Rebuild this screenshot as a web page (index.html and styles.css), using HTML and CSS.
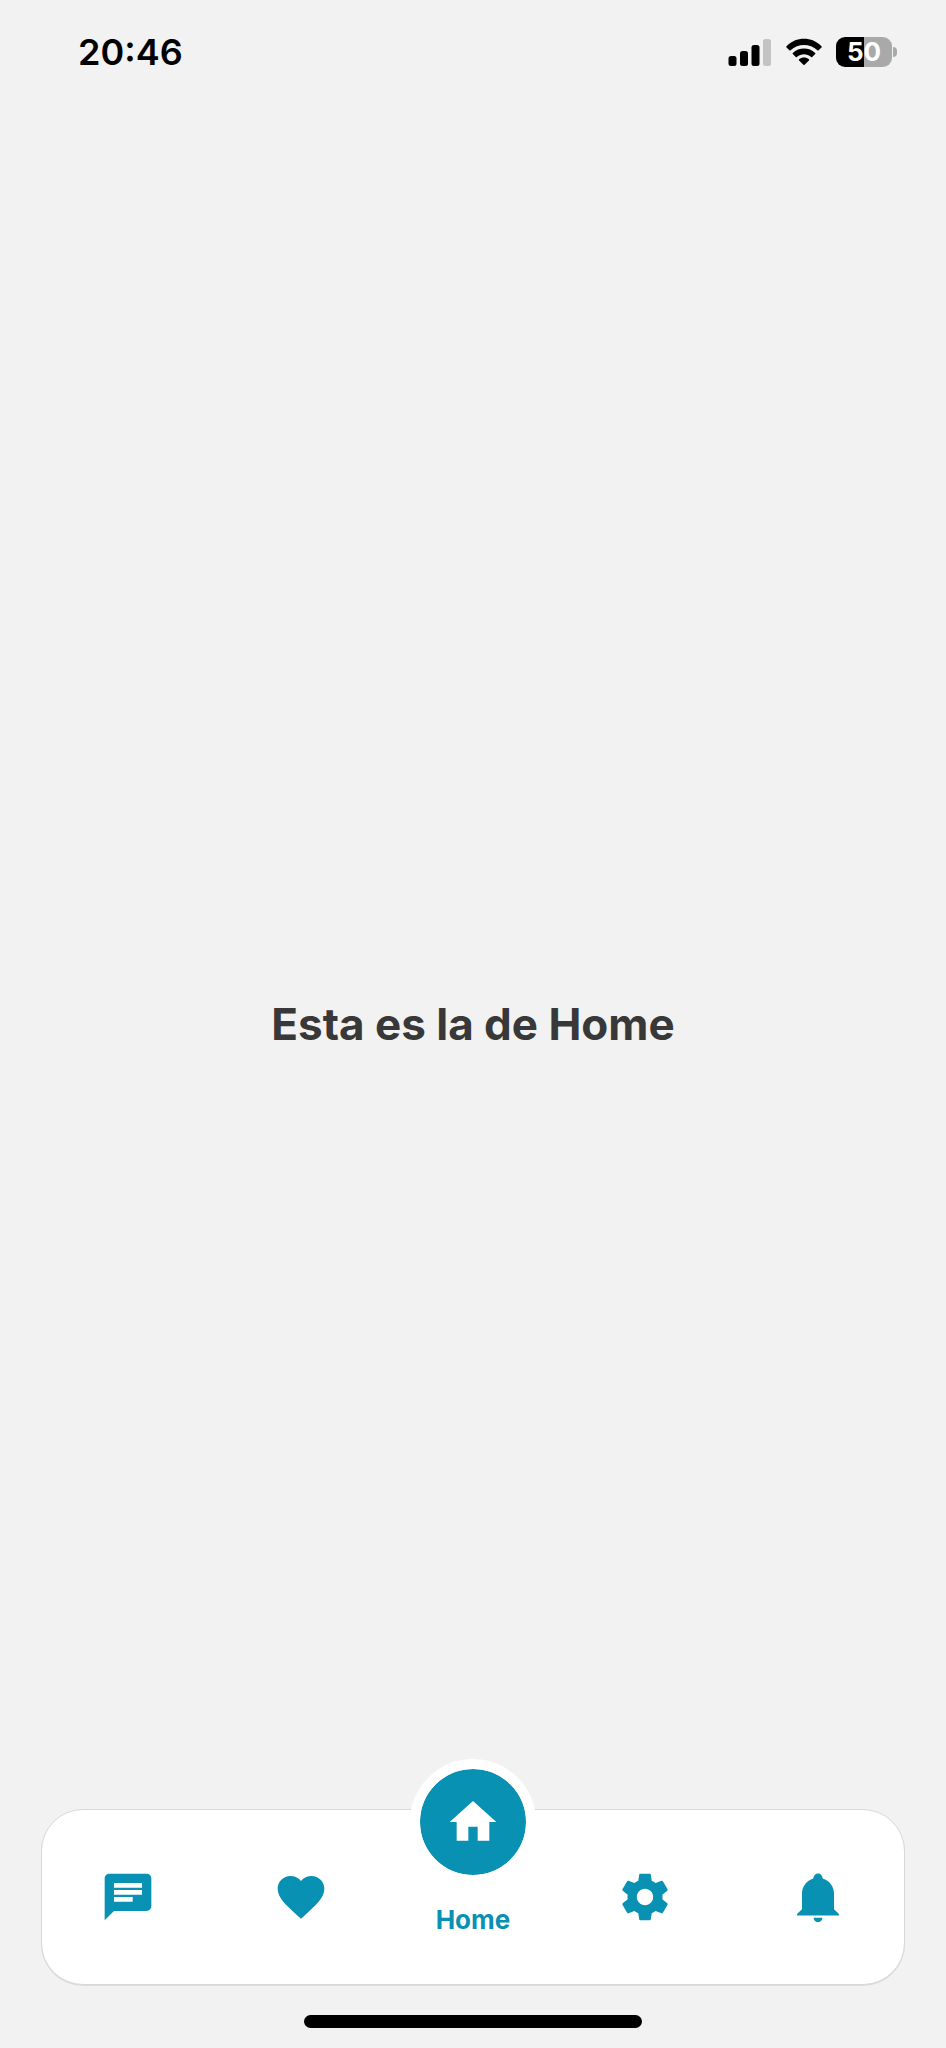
FILE: index.html
```html
<!DOCTYPE html>
<html lang="es">
<head>
<meta charset="utf-8">
<meta name="viewport" content="width=device-width, initial-scale=1">
<title>Home</title>
<link rel="stylesheet" href="styles.css">
</head>
<body class="screen">
  <header class="status">
    <time class="clock">20:46</time>
    <div class="indicators">
      <svg class="signal" viewBox="0 0 44 30" aria-hidden="true">
        <rect x="0.5" y="19" width="8" height="10" rx="2.5"/>
        <rect x="12" y="14" width="8" height="15" rx="2.5"/>
        <rect x="23.5" y="8" width="8" height="21" rx="2.5"/>
        <rect class="signal-off" x="35" y="2" width="8" height="27" rx="2.5"/>
      </svg>
      <svg class="wifi" viewBox="0 0 36 28" aria-hidden="true">
        <path d="M0.5 8.2C10 -1.7 26 -1.7 35.5 8.2Q36 8.8 35.5 9.4L32.6 12.3Q32 12.8 31.4 12.3C24 5.2 12 5.2 4.6 12.3Q4 12.8 3.4 12.3L0.5 9.4Q0 8.8 0.5 8.2Z"/>
        <path d="M6.8 14.9C13 9 23 9 29.2 14.9Q29.7 15.4 29.2 16L26.2 18.9Q25.7 19.4 25.1 18.9C21 15.4 15 15.4 10.9 18.9Q10.3 19.4 9.8 18.9L6.8 16Q6.3 15.4 6.8 14.9Z"/>
        <path d="M13.1 21.3C16 19 20 19 22.9 21.3Q23.5 21.9 22.9 22.5L18.6 26.8Q18 27.4 17.4 26.8L13.1 22.5Q12.5 21.9 13.1 21.3Z"/>
      </svg>
      <div class="battery">
        <span class="battery-body">50</span>
        <span class="battery-tip"></span>
      </div>
    </div>
  </header>

  <main class="content">
    <h1 class="title">Esta es la de Home</h1>
  </main>

  <footer class="bottom">
    <nav class="tabs" aria-label="Principal">
      <a class="tab" href="#mensajes" aria-label="Mensajes">
        <svg class="icon" viewBox="0 0 24 24"><path d="M20 2H4c-1.1 0-1.99.9-1.99 2L2 22l4-4h14c1.1 0 2-.9 2-2V4c0-1.1-.9-2-2-2zM6 9h12v2H6V9zm8 5H6v-2h8v2zm4-6H6V6h12v2z"/></svg>
      </a>
      <a class="tab" href="#favoritos" aria-label="Favoritos">
        <svg class="icon" viewBox="0 0 24 24"><path d="M12 21.35l-1.45-1.32C5.4 15.36 2 12.28 2 8.5 2 5.42 4.42 3 7.5 3c1.74 0 3.41.81 4.5 2.09C13.09 3.81 14.76 3 16.5 3 19.58 3 22 5.42 22 8.5c0 3.78-3.4 6.86-8.55 11.54L12 21.35z"/></svg>
      </a>
      <a class="tab tab-active" href="#home" aria-current="page">
        <span class="bubble">
          <svg class="icon" viewBox="0 0 24 24"><path d="M10 20v-6h4v6h5v-8h3L12 3 2 12h3v8z"/></svg>
        </span>
        <span class="label">Home</span>
      </a>
      <a class="tab" href="#ajustes" aria-label="Ajustes">
        <svg class="icon" viewBox="0 0 24 24"><path d="M19.43 12.98c.04-.32.07-.64.07-.98s-.03-.66-.07-.98l2.11-1.65c.19-.15.24-.42.12-.64l-2-3.46c-.12-.22-.39-.3-.61-.22l-2.49 1c-.52-.4-1.08-.73-1.69-.98l-.38-2.65C14.46 2.18 14.25 2 14 2h-4c-.25 0-.46.18-.49.42l-.38 2.65c-.61.25-1.17.59-1.69.98l-2.49-1c-.23-.09-.49 0-.61.22l-2 3.46c-.13.22-.07.49.12.64l2.11 1.65c-.04.32-.07.65-.07.98s.03.66.07.98l-2.11 1.65c-.19.15-.24.42-.12.64l2 3.46c.12.22.39.3.61.22l2.49-1c.52.4 1.08.73 1.69.98l.38 2.65c.03.24.24.42.49.42h4c.25 0 .46-.18.49-.42l.38-2.65c.61-.25 1.17-.59 1.69-.98l2.49 1c.23.09.49 0 .61-.22l2-3.46c.12-.22.07-.49-.12-.64l-2.11-1.65zM12 15.5c-1.93 0-3.5-1.57-3.5-3.5s1.57-3.5 3.5-3.5 3.5 1.57 3.5 3.5-1.57 3.5-3.5 3.5z"/></svg>
      </a>
      <a class="tab" href="#avisos" aria-label="Avisos">
        <svg class="icon" viewBox="0 0 56 56"><path d="M28 4.500C25.300 4.500 23.600 6.500 23.300 9.500C16.500 11.500 12 17.500 12 24.500V40.200L7.500 44.500Q7 45.200 7 46.500H49Q49 45.200 48.500 44.500L44 40.200V24.500C44 17.500 39.500 11.500 32.700 9.500C32.400 6.500 30.700 4.500 28 4.500ZM23.500 48.800H32.500C32.200 51.500 30.500 53.200 28 53.200S23.800 51.500 23.500 48.800Z"/></svg>
      </a>
    </nav>
    <div class="home-indicator"></div>
  </footer>
</body>
</html>
```
FILE: styles.css
```css
:root {
  --accent: #0891b2;
  --surface: #ffffff;
  --page: #f2f2f2;
}

* {
  box-sizing: border-box;
}

.screen {
  margin: 0;
  min-height: 100vh;
  display: grid;
  grid-template-rows: 1fr auto 1fr;
  background: var(--page);
  color: #000;
  font-family: Inter, "Liberation Sans", sans-serif;
}

.status {
  display: flex;
  justify-content: space-between;
  align-items: center;
  align-self: start;
  padding: 32px 49px 0 78px;
}

.clock {
  font-size: 36px;
  line-height: 40px;
  font-weight: 600;
}

.indicators {
  display: flex;
  align-items: center;
  gap: 14px;
}

.signal {
  width: 44px;
  height: 30px;
}

.signal-off {
  fill: #c3c3c3;
}

.wifi {
  width: 36px;
  height: 28px;
}

.battery {
  display: flex;
  align-items: center;
  gap: 1px;
}

.battery-body {
  width: 56px;
  height: 30px;
  border-radius: 9px;
  background: linear-gradient(90deg, #000 50%, #a9a9a9 50%);
  color: #fff;
  font-size: 26px;
  line-height: 30px;
  font-weight: 700;
  text-align: center;
}

.battery-tip {
  width: 4px;
  height: 10px;
  border-radius: 0 4px 4px 0;
  background: #a9a9a9;
}

.title {
  margin: 0;
  color: #383838;
  font-size: 44px;
  line-height: 56px;
  font-weight: 700;
  text-align: center;
}

.bottom {
  align-self: end;
  padding: 0 41px 20px;
}

.tabs {
  display: grid;
  grid-template-columns: repeat(5, 1fr);
  height: 176px;
  border: 1px solid #d8d8d8;
  border-radius: 42px;
  background: var(--surface);
  box-shadow: 0 1px 0 #dcdcdc;
}

.tab {
  display: flex;
  flex-direction: column;
  align-items: center;
  justify-content: center;
  color: var(--accent);
  text-decoration: none;
}

.icon {
  width: 56px;
  height: 56px;
  fill: currentColor;
}

.tab-active {
  justify-content: flex-start;
  gap: 18px;
}

.bubble {
  display: grid;
  place-items: center;
  width: 126px;
  height: 126px;
  margin-top: -51px;
  border: 10px solid var(--surface);
  border-radius: 50%;
  background: var(--accent);
  background-clip: padding-box;
  color: var(--surface);
}

.label {
  font-size: 26px;
  line-height: 34px;
  font-weight: 700;
}

.home-indicator {
  width: 338px;
  height: 13px;
  margin: 30px auto 0;
  border-radius: 7px;
  background: #000;
}
```
